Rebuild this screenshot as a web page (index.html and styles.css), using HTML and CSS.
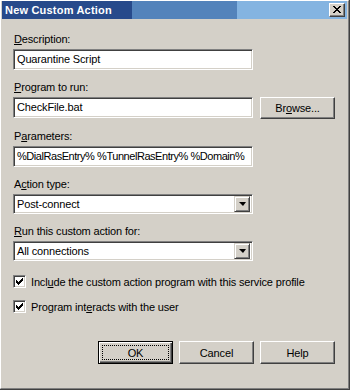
FILE: index.html
```html
<!DOCTYPE html>
<html lang="en">
<head>
    <meta charset="UTF-8">
    <title>New Custom Action</title>
    <link rel="stylesheet" href="styles.css">
</head>
<body>
    <div class="window">
        <div class="frame">
            <div class="titlebar">
                <span class="title">New Custom Action</span>
                <div class="close-btn">
                    <svg width="8" height="7" viewBox="0 0 8 7" shape-rendering="crispEdges">
                        <path d="M0 0h2v1h-2zM6 0h2v1h-2zM1 1h2v1h-2zM5 1h2v1h-2zM2 2h4v1h-4zM3 3h2v1h-2zM2 4h4v1h-4zM1 5h2v1h-2zM5 5h2v1h-2zM0 6h2v1h-2zM6 6h2v1h-2z" fill="#000"/>
                    </svg>
                </div>
            </div>
            <div class="content">
                <div class="field">
                    <div class="label"><u>D</u>escription:</div>
                    <div class="textbox">Quarantine Script</div>
                </div>
                <div class="field">
                    <div class="label"><u>P</u>rogram to run:</div>
                    <div class="row">
                        <div class="textbox">CheckFile.bat</div>
                        <div class="button">Br<u>o</u>wse...</div>
                    </div>
                </div>
                <div class="field">
                    <div class="label">P<u>a</u>rameters:</div>
                    <div class="textbox params">%DialRasEntry% %TunnelRasEntry% %Domain%</div>
                </div>
                <div class="field">
                    <div class="label">A<u>c</u>tion type:</div>
                    <div class="combo">
                        <span>Post-connect</span>
                        <div class="combo-btn"><span class="arrow"></span></div>
                    </div>
                </div>
                <div class="field">
                    <div class="label"><u>R</u>un this custom action for:</div>
                    <div class="combo">
                        <span>All connections</span>
                        <div class="combo-btn"><span class="arrow"></span></div>
                    </div>
                </div>
                <div class="checks">
                    <div class="check-row">
                        <div class="checkbox">
                            <svg width="7" height="7" viewBox="0 0 7 7" shape-rendering="crispEdges">
                                <path d="M6 0h1v3h-1zM5 1h1v3h-1zM0 2h1v3h-1zM4 2h1v3h-1zM1 3h1v3h-1zM3 3h1v3h-1zM2 4h1v3h-1z" fill="#000"/>
                            </svg>
                        </div>
                        <span>Incl<u>u</u>de the custom action program with this service profile</span>
                    </div>
                    <div class="check-row">
                        <div class="checkbox">
                            <svg width="7" height="7" viewBox="0 0 7 7" shape-rendering="crispEdges">
                                <path d="M6 0h1v3h-1zM5 1h1v3h-1zM0 2h1v3h-1zM4 2h1v3h-1zM1 3h1v3h-1zM3 3h1v3h-1zM2 4h1v3h-1z" fill="#000"/>
                            </svg>
                        </div>
                        <span>Program int<u>e</u>racts with the user</span>
                    </div>
                </div>
                <div class="actions">
                    <div class="button default"><span class="focus">OK</span></div>
                    <div class="button">Cancel</div>
                    <div class="button">Help</div>
                </div>
            </div>
        </div>
    </div>
</body>
</html>
```

FILE: styles.css
```css
* {
    box-sizing: border-box;
}
body {
    margin: 0;
    background-color: #d4d0c8;
    font-family: "Liberation Sans", Arial, sans-serif;
    font-size: 11px;
    letter-spacing: -0.15px;
    color: #000;
}
.window {
    width: 350px;
    height: 390px;
    border-right: 1px solid #404040;
    border-bottom: 1px solid #404040;
}
.frame {
    height: 100%;
    border: 1px solid;
    border-color: #fff #808080 #808080 #fff;
    padding: 0 1px 1px 1px;
    display: flex;
    flex-direction: column;
}
.titlebar {
    height: 18px;
    display: flex;
    align-items: center;
    justify-content: space-between;
    padding: 0 2px 0 3px;
    background: linear-gradient(to right, #274a8b 0, #274a8b 37.6%, #5383bb 37.6%, #5383bb 68.2%, #84b4e1 68.2%, #84b4e1 100%);
}
.title {
    color: #fff;
    font-weight: bold;
    font-size: 11px;
    letter-spacing: 0.2px;
}
.close-btn {
    width: 16px;
    height: 14px;
    background-color: #d4d0c8;
    border: 1px solid;
    border-color: #fff #404040 #404040 #fff;
    box-shadow: inset -1px -1px 0 #808080;
    display: flex;
    justify-content: center;
    align-items: center;
    padding-bottom: 1px;
}
.content {
    flex: 1;
    padding: 14px 0 0 11px;
    display: flex;
    flex-direction: column;
}
.field {
    width: 322px;
    margin-bottom: 11px;
}
.label {
    line-height: 13px;
    height: 13px;
    margin-bottom: 3px;
    padding-left: 1px;
}
.row {
    display: flex;
    gap: 7px;
}
.textbox, .combo {
    width: 240px;
    height: 21px;
    background-color: #fff;
    border: 1px solid;
    border-color: #808080 #fff #fff #808080;
    box-shadow: inset 1px 1px 0 #404040, inset -1px -1px 0 #d4d0c8;
    padding: 0 3px;
    line-height: 19px;
    white-space: nowrap;
    overflow: hidden;
}
.textbox.params {
    letter-spacing: -0.45px;
}
.combo {
    height: 20px;
    display: flex;
    justify-content: space-between;
    align-items: center;
    padding: 0 2px 0 3px;
}
.combo-btn {
    width: 16px;
    height: 16px;
    background-color: #d4d0c8;
    border: 1px solid;
    border-color: #d4d0c8 #404040 #404040 #d4d0c8;
    box-shadow: inset 1px 1px 0 #fff, inset -1px -1px 0 #808080;
    display: flex;
    justify-content: center;
    align-items: center;
}
.arrow {
    width: 0;
    height: 0;
    border-left: 4px solid transparent;
    border-right: 3px solid transparent;
    border-top: 4px solid #000;
}
.button {
    width: 75px;
    height: 22px;
    background-color: #d4d0c8;
    border: 1px solid;
    border-color: #fff #404040 #404040 #fff;
    box-shadow: inset -1px -1px 0 #808080;
    display: flex;
    justify-content: center;
    align-items: center;
}
.checks {
    margin-top: 3px;
    display: flex;
    flex-direction: column;
    gap: 12px;
}
.check-row {
    display: flex;
    align-items: center;
    gap: 5px;
    height: 13px;
}
.checkbox {
    width: 13px;
    height: 13px;
    background-color: #fff;
    border: 1px solid;
    border-color: #808080 #fff #fff #808080;
    box-shadow: inset 1px 1px 0 #404040, inset -1px -1px 0 #d4d0c8;
    display: flex;
    justify-content: center;
    align-items: center;
}
.actions {
    display: flex;
    gap: 6px;
    margin-top: 28px;
    padding-left: 85px;
}
.actions .button {
    height: 23px;
}
.button.default {
    border: 1px solid #000;
    box-shadow: inset 1px 1px 0 #fff, inset -1px -1px 0 #404040, inset -2px -2px 0 #808080;
    padding: 3px;
}
.focus {
    width: 100%;
    height: 100%;
    border: 1px dotted #000;
    display: flex;
    justify-content: center;
    align-items: center;
}
```
